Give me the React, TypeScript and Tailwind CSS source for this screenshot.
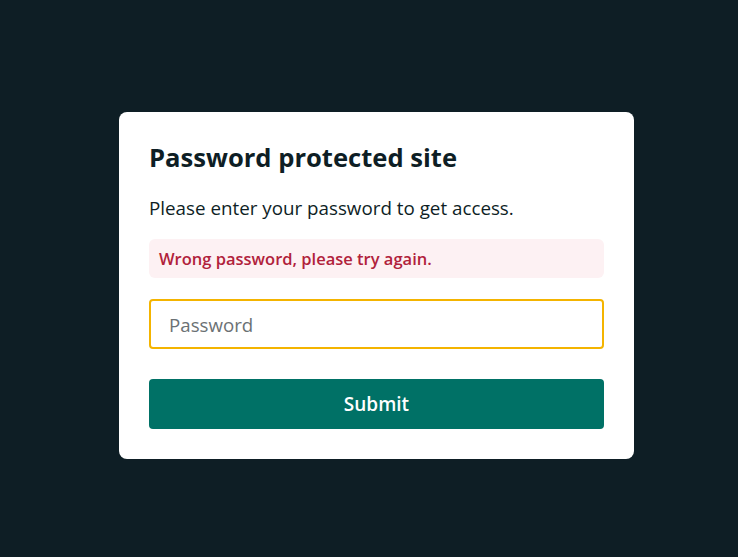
export default function App() {
  return (
    <div
      className="flex min-h-screen items-center justify-center bg-[#0e1e25] pl-[15px] pt-[14px]"
      style={{ fontFamily: '"Open Sans", "Noto Sans", sans-serif' }}
    >
      <form
        className="flex w-[515px] flex-col rounded-lg bg-white p-[30px] text-[#0e1e25]"
        onSubmit={(e) => e.preventDefault()}
      >
        <h1 className="text-[25.6px] font-bold leading-[32px]">Password protected site</h1>
        <p className="mt-[20px] text-[18.8px] leading-[28px]">
          Please enter your password to get access.
        </p>
        <div className="mt-[17px] rounded-md bg-[#fdf1f3] px-[10px] py-[8px] text-[16.5px] font-semibold leading-[23px] text-[#b1213b]">
          Wrong password, please try again.
        </div>
        <input
          className="mt-[21px] h-[50px] rounded border-2 border-[#f4b400] px-[18px] text-[18.7px] outline-none placeholder:text-[#6b7174]"
          placeholder="Password"
          type="password"
        />
        <button
          className="mt-[30px] h-[50px] rounded bg-[#007166] text-[19px] font-semibold text-white"
          type="submit"
        >
          Submit
        </button>
      </form>
    </div>
  );
}
